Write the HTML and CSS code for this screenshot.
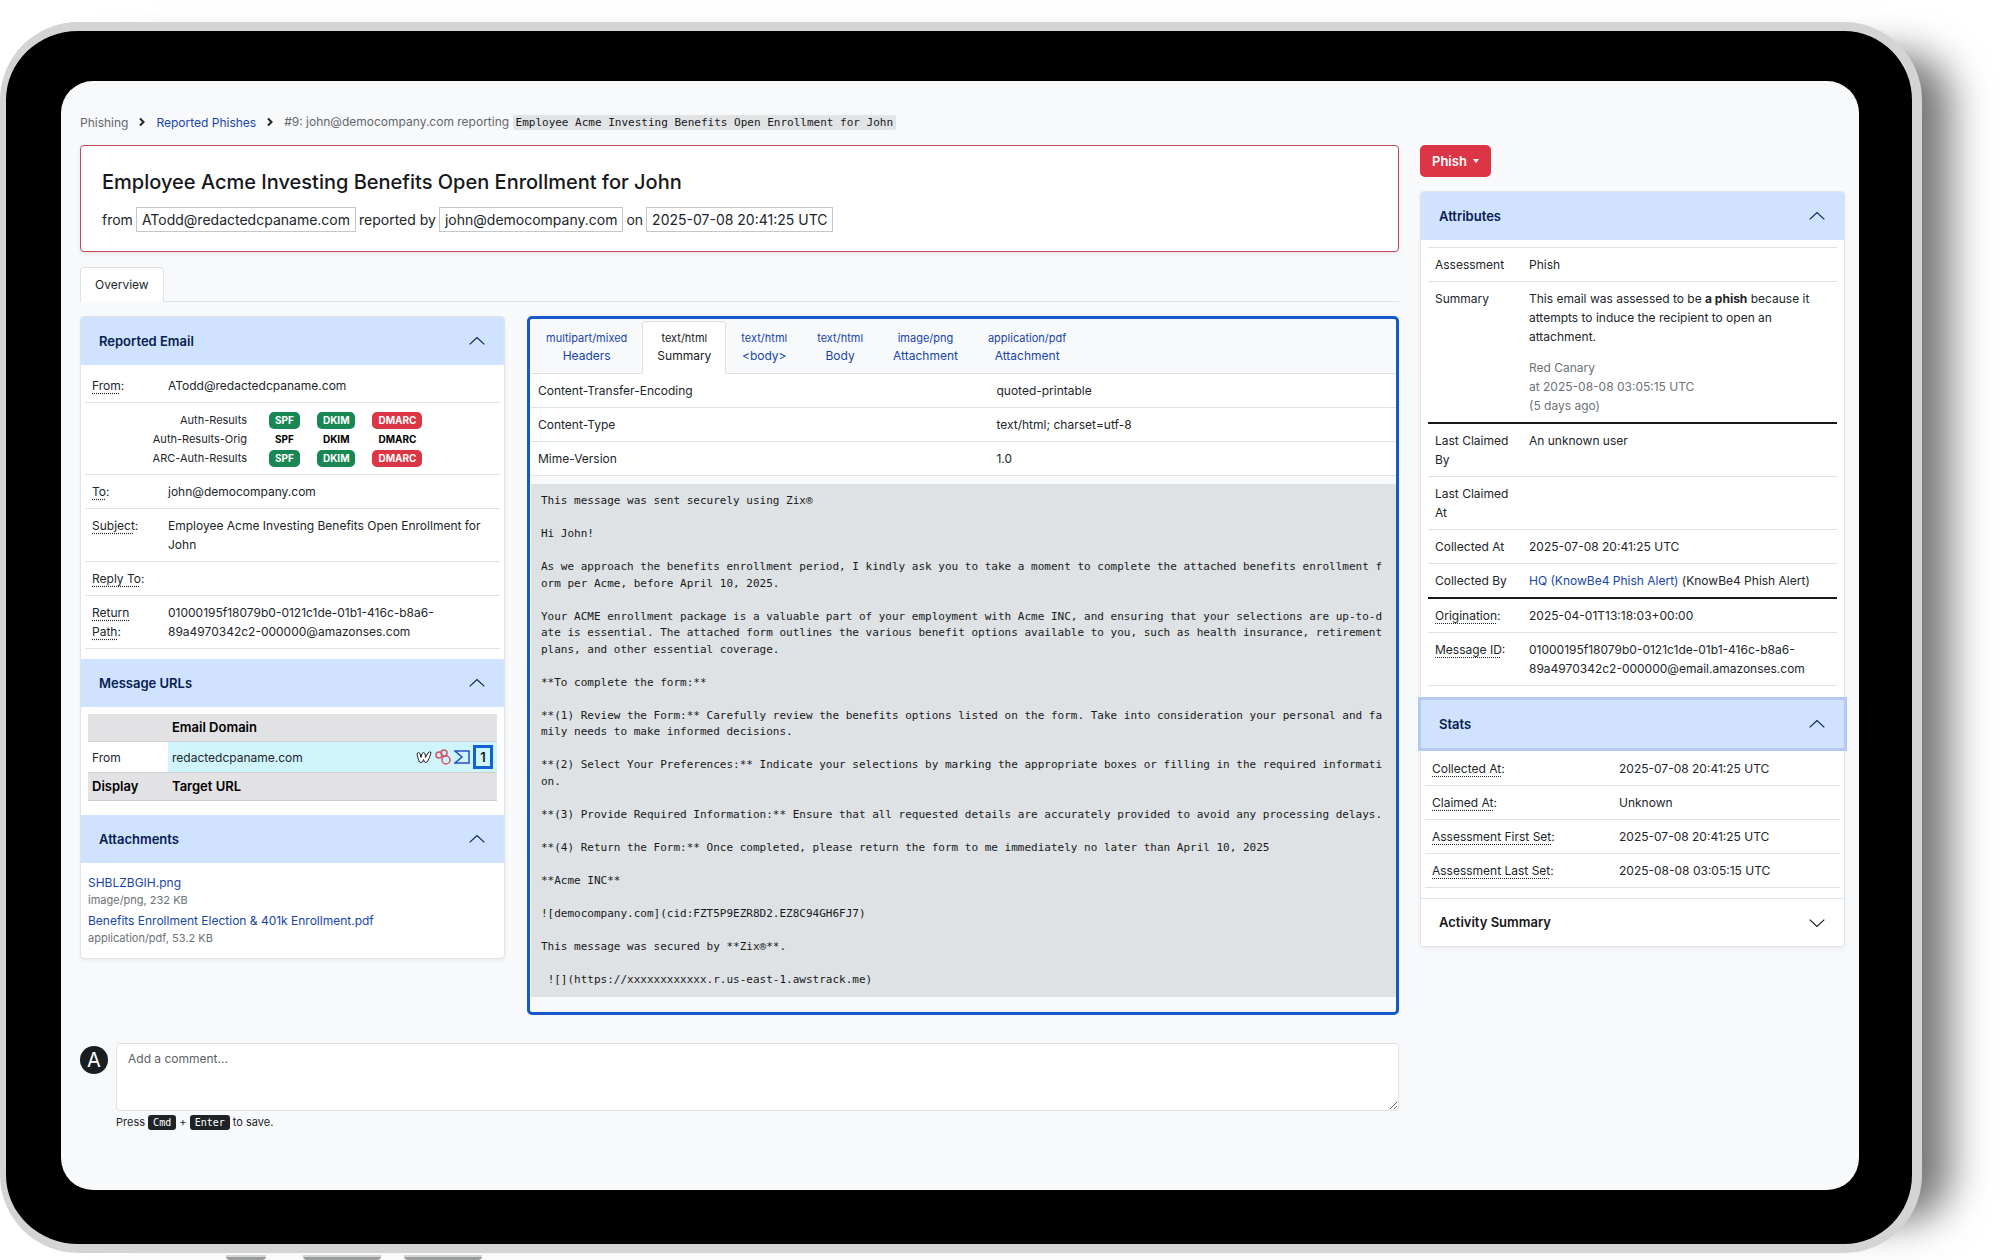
FILE: index.html
```html
<!DOCTYPE html>
<html lang="en">

<head>
    <meta charset="UTF-8">
    <meta name="viewport" content="width=device-width, initial-scale=1.0">
    <title>Reported Phish #9</title>
    <link rel="stylesheet" href="styles.css">
</head>

<body>
    <div class="device">
        <div class="screen">
            <main class="main">
                <!-- Breadcrumb -->
                <nav class="breadcrumb" aria-label="Breadcrumb">
                    <span>Phishing</span>
                    <svg class="crumb-arrow" viewBox="0 0 8 10"><path d="M2 1.5 5.5 5 2 8.5"/></svg>
                    <a href="#">Reported Phishes</a>
                    <svg class="crumb-arrow" viewBox="0 0 8 10"><path d="M2 1.5 5.5 5 2 8.5"/></svg>
                    <span>#9: john@democompany.com reporting <code>Employee Acme Investing Benefits Open Enrollment for John</code></span>
                </nav>

                <!-- Title -->
                <header class="title-box">
                    <h1>Employee Acme Investing Benefits Open Enrollment for John</h1>
                    <p class="title-meta">
                        <span>from</span> <span class="chip">ATodd@redactedcpaname.com</span>
                        <span>reported by</span> <span class="chip">john@democompany.com</span>
                        <span>on</span> <span class="chip">2025-07-08 20:41:25 UTC</span>
                    </p>
                </header>

                <div class="tabs">
                    <button type="button" class="tab active">Overview</button>
                </div>

                <div class="columns">
                    <!-- Left column -->
                    <div class="accordion">
                        <section>
                            <h2><button type="button" class="accordion-button" aria-expanded="true">Reported Email
                                <svg class="chevron" viewBox="0 0 16 16"><path d="M1.5 11 8 5l6.5 6"/></svg></button></h2>
                            <div class="accordion-body">
                                <table class="info email-table">
                                    <tr><th><abbr>From</abbr>:</th><td>ATodd@redactedcpaname.com</td></tr>
                                    <tr class="auth-row">
                                        <td colspan="2">
                                            <div class="auth">
                                                <span>Auth-Results</span>
                                                <b class="badge pass">SPF</b><b class="badge pass">DKIM</b><b class="badge fail">DMARC</b>
                                                <span>Auth-Results-Orig</span>
                                                <b class="badge">SPF</b><b class="badge">DKIM</b><b class="badge">DMARC</b>
                                                <span>ARC-Auth-Results</span>
                                                <b class="badge pass">SPF</b><b class="badge pass">DKIM</b><b class="badge fail">DMARC</b>
                                            </div>
                                        </td>
                                    </tr>
                                    <tr><th><abbr>To</abbr>:</th><td>john@democompany.com</td></tr>
                                    <tr><th><abbr>Subject</abbr>:</th><td>Employee Acme Investing Benefits Open Enrollment for John</td></tr>
                                    <tr><th><abbr>Reply To</abbr>:</th><td></td></tr>
                                    <tr><th><abbr>Return Path</abbr>:</th><td>01000195f18079b0-0121c1de-01b1-416c-b8a6-89a4970342c2-000000@amazonses.com</td></tr>
                                </table>
                            </div>
                        </section>
                        <section>
                            <h2><button type="button" class="accordion-button" aria-expanded="true">Message URLs
                                <svg class="chevron" viewBox="0 0 16 16"><path d="M1.5 11 8 5l6.5 6"/></svg></button></h2>
                            <div class="accordion-body urls-body">
                                <table class="urls">
                                    <tr class="head"><th></th><th>Email Domain</th></tr>
                                    <tr>
                                        <td>From</td>
                                        <td class="domain">
                                            <div class="domain-row">
                                                <span>redactedcpaname.com</span>
                                                <a href="#" aria-label="Whois"><svg class="whois" viewBox="0 0 16 16"><path d="M1 4.5Q2.5 2.5 4 4.5L5 8.5 6 4.5Q7.5 2.5 9 4.5L9.5 8.5 12 4Q13.5 2 15 3.5 14 9 11 13 9.5 14 8.5 13L7.5 10.5 6.5 13Q5 14 3.5 13 1.5 9 1 4.5Z"/></svg></a>
                                                <a href="#" aria-label="Related domains"><svg class="circles" viewBox="0 0 16 16"><circle cx="4" cy="6" r="3"/><circle cx="9" cy="4" r="3"/><circle cx="11" cy="11" r="4"/></svg></a>
                                                <a href="#" aria-label="VirusTotal"><svg class="sigma" viewBox="0 0 16 16"><path d="M1 2h14v12H1l7-6z"/></svg></a>
                                                <a href="#" class="count">1</a>
                                            </div>
                                        </td>
                                    </tr>
                                    <tr class="head"><th>Display</th><th>Target URL</th></tr>
                                </table>
                            </div>
                        </section>
                        <section>
                            <h2><button type="button" class="accordion-button" aria-expanded="true">Attachments
                                <svg class="chevron" viewBox="0 0 16 16"><path d="M1.5 11 8 5l6.5 6"/></svg></button></h2>
                            <ul class="accordion-body files">
                                <li><a href="#">SHBLZBGIH.png</a><small>image/png, 232 KB</small></li>
                                <li><a href="#">Benefits Enrollment Election &amp; 401k Enrollment.pdf</a><small>application/pdf, 53.2 KB</small></li>
                            </ul>
                        </section>
                    </div>

                    <!-- Message parts -->
                    <section class="message">
                        <div class="parts">
                            <button type="button" class="part"><small>multipart/mixed</small>Headers</button>
                            <button type="button" class="part active"><small>text/html</small>Summary</button>
                            <button type="button" class="part"><small>text/html</small>&lt;body&gt;</button>
                            <button type="button" class="part"><small>text/html</small>Body</button>
                            <button type="button" class="part"><small>image/png</small>Attachment</button>
                            <button type="button" class="part"><small>application/pdf</small>Attachment</button>
                        </div>
                        <table class="info headers-table">
                            <tr><th>Content-Transfer-Encoding</th><td>quoted-printable</td></tr>
                            <tr><th>Content-Type</th><td>text/html; charset=utf-8</td></tr>
                            <tr><th>Mime-Version</th><td>1.0</td></tr>
                        </table>
                        <pre class="source">This message was sent securely using Zix®

Hi John!

As we approach the benefits enrollment period, I kindly ask you to take a moment to complete the attached benefits enrollment form per Acme, before April 10, 2025.

Your ACME enrollment package is a valuable part of your employment with Acme INC, and ensuring that your selections are up-to-date is essential. The attached form outlines the various benefit options available to you, such as health insurance, retirement plans, and other essential coverage.

**To complete the form:**

**(1) Review the Form:** Carefully review the benefits options listed on the form. Take into consideration your personal and family needs to make informed decisions.

**(2) Select Your Preferences:** Indicate your selections by marking the appropriate boxes or filling in the required information.

**(3) Provide Required Information:** Ensure that all requested details are accurately provided to avoid any processing delays.

**(4) Return the Form:** Once completed, please return the form to me immediately no later than April 10, 2025

**Acme INC**

![democompany.com](cid:FZT5P9EZR8D2.EZ8C94GH6FJ7)

This message was secured by **Zix®**.

 ![](https://xxxxxxxxxxxx.r.us-east-1.awstrack.me)</pre>
                    </section>
                </div>

                <!-- Comment -->
                <form class="comment">
                    <span class="avatar">A</span>
                    <div class="comment-field">
                        <textarea id="comment" aria-label="Comment" placeholder="Add a comment..."></textarea>
                        <label for="comment">Press <kbd>Cmd</kbd> + <kbd>Enter</kbd> to save.</label>
                    </div>
                </form>
            </main>

            <!-- Right column -->
            <aside class="side">
                <button type="button" class="phish-button">Phish <span class="caret"></span></button>
                <div class="accordion">
                    <section>
                        <h2><button type="button" class="accordion-button" aria-expanded="true">Attributes
                            <svg class="chevron" viewBox="0 0 16 16"><path d="M1.5 11 8 5l6.5 6"/></svg></button></h2>
                        <div class="accordion-body attributes-body">
                            <table class="info attributes-table">
                                <tr><th>Assessment</th><td>Phish</td></tr>
                                <tr class="group-end">
                                    <th>Summary</th>
                                    <td>
                                        <p>This email was assessed to be <b>a phish</b> because it attempts to induce the recipient to open an attachment.</p>
                                        <p class="muted">Red Canary<br>at 2025-08-08 03:05:15 UTC<br>(5 days ago)</p>
                                    </td>
                                </tr>
                                <tr><th>Last Claimed By</th><td>An unknown user</td></tr>
                                <tr><th>Last Claimed At</th><td></td></tr>
                                <tr><th>Collected At</th><td>2025-07-08 20:41:25 UTC</td></tr>
                                <tr class="group-end"><th>Collected By</th><td><a href="#">HQ (KnowBe4 Phish Alert)</a> (KnowBe4 Phish Alert)</td></tr>
                                <tr><th><abbr>Origination</abbr>:</th><td>2025-04-01T13:18:03+00:00</td></tr>
                                <tr><th><abbr>Message ID</abbr>:</th><td>01000195f18079b0-0121c1de-01b1-416c-b8a6-89a4970342c2-000000@email.amazonses.com</td></tr>
                            </table>
                        </div>
                    </section>
                    <section>
                        <h2><button type="button" class="accordion-button focused" aria-expanded="true">Stats
                            <svg class="chevron" viewBox="0 0 16 16"><path d="M1.5 11 8 5l6.5 6"/></svg></button></h2>
                        <div class="accordion-body">
                            <table class="info stats-table">
                                <tr><th><abbr>Collected At</abbr>:</th><td>2025-07-08 20:41:25 UTC</td></tr>
                                <tr><th><abbr>Claimed At</abbr>:</th><td>Unknown</td></tr>
                                <tr><th><abbr>Assessment First Set</abbr>:</th><td>2025-07-08 20:41:25 UTC</td></tr>
                                <tr><th><abbr>Assessment Last Set</abbr>:</th><td>2025-08-08 03:05:15 UTC</td></tr>
                            </table>
                        </div>
                    </section>
                    <section>
                        <h2><button type="button" class="accordion-button" aria-expanded="false">Activity Summary
                            <svg class="chevron" viewBox="0 0 16 16"><path d="M1.5 11 8 5l6.5 6"/></svg></button></h2>
                    </section>
                </div>
            </aside>
        </div>
    </div>
    <div class="feet"><span></span><span></span><span></span></div>

    <script>
        // Open and close the accordion sections
        document.querySelectorAll('.accordion-button').forEach((button) => {
            button.addEventListener('click', () => {
                const body = button.parentElement.nextElementSibling;
                const open = button.getAttribute('aria-expanded') === 'true';
                button.setAttribute('aria-expanded', String(!open));
                if (body) {
                    body.hidden = open;
                }
            });
        });
    </script>
</body>

</html>
```
FILE: styles.css
```css
* {
    box-sizing: border-box;
}

body {
    display: flex;
    flex-direction: column;
    min-height: 100vh;
    margin: 0;
    padding-top: 22px;
    background-color: #fff;
    color: #212529;
    font-family: Inter, "Liberation Sans", sans-serif;
    font-size: 12px;
    line-height: 19px;
    overflow-x: hidden;
}

h1, h2, p, ul, pre {
    margin: 0;
}

a {
    color: #1746a8;
    text-decoration: none;
}

button {
    font: inherit;
    cursor: pointer;
}

[hidden] {
    display: none;
}

/* Tablet frame */
.device {
    display: flex;
    flex: 1;
    margin-right: 78px;
    padding: 50px 53px 54px 55px;
    background-color: #000;
    border: solid #d3d5d4;
    border-width: 9px 10px 9px 6px;
    border-radius: 78px;
    box-shadow: 60px 0 40px -32px rgba(0, 0, 0, 0.55);
}

.screen {
    display: grid;
    flex: 1;
    grid-template-columns: minmax(0, 1fr) 425px;
    align-items: start;
    gap: 21px;
    padding: 31px 14px 32px 19px;
    background-color: #f8f9fb;
    border-radius: 32px;
}

.feet {
    display: flex;
    gap: 23px;
    height: 7px;
    padding: 2px 0 0 226px;
}

.feet span {
    width: 78px;
    background-color: #9b9c9e;
    border-top: 2px solid #d3d5d4;
    border-radius: 0 0 4px 4px;
}

.feet span:first-child {
    width: 40px;
    margin-right: 14px;
}

/* Breadcrumb */
.breadcrumb {
    display: flex;
    align-items: center;
    gap: 10px;
    height: 20px;
    margin-bottom: 13px;
    color: #62676c;
}

.breadcrumb code {
    padding: 1px 3px;
    background-color: #e1e3e5;
    border-radius: 2px;
    color: #16181b;
    font-family: "DejaVu Sans Mono", monospace;
    font-size: 11px;
}

.crumb-arrow {
    width: 8px;
    height: 10px;
    fill: none;
    stroke: #212529;
    stroke-width: 2;
}

/* Title */
.title-box {
    padding: 22px 21px 19px;
    background-color: #fff;
    border: 1px solid #c04a5c;
    border-radius: 4px;
    box-shadow: 0 2px 4px rgba(0, 0, 0, 0.08);
}

.title-box h1 {
    margin-bottom: 11px;
    color: #16181b;
    font-size: 20px;
    font-weight: 500;
    line-height: 28px;
}

.title-meta {
    display: flex;
    align-items: center;
    gap: 3px;
    font-size: 14px;
}

.chip {
    padding: 1px 5px;
    border: 1px solid #c4c7ca;
    line-height: 21px;
}

/* Tabs */
.tabs {
    display: flex;
    margin: 15px 0 14px;
    border-bottom: 1px solid #dee2e6;
}

.tab {
    margin-bottom: -1px;
    padding: 7px 14px;
    background-color: #fff;
    border: 1px solid #dee2e6;
    border-bottom-color: #fff;
    border-radius: 4px 4px 0 0;
    color: #212529;
}

.columns {
    display: grid;
    grid-template-columns: 425px minmax(0, 1fr);
    align-items: start;
    gap: 22px;
}

/* Accordion */
.accordion {
    background-color: #fff;
    border: 1px solid #dfe2e6;
    border-radius: 4px;
    box-shadow: 0 2px 4px rgba(0, 0, 0, 0.05);
}

.accordion h2 {
    font-size: 13px;
}

.accordion-button {
    display: flex;
    align-items: center;
    justify-content: space-between;
    width: 100%;
    height: 48px;
    padding: 0 18px;
    background-color: #cfe2ff;
    border: 0;
    color: #06204f;
    font-size: 13px;
    font-weight: 600;
}

.accordion section:first-child .accordion-button {
    border-radius: 3px 3px 0 0;
}

.accordion-button.focused {
    box-shadow: 0 0 0 3px #b5c9ee;
}

.accordion-button[aria-expanded="false"] {
    background-color: #fff;
    border-top: 1px solid #dfe2e6;
    border-radius: 0 0 3px 3px;
    color: #16181b;
}

.chevron {
    width: 18px;
    height: 18px;
    fill: none;
    stroke: currentColor;
    stroke-width: 1;
}

.accordion-button[aria-expanded="false"] .chevron {
    transform: rotate(180deg);
}

.accordion-body {
    padding: 4px 4px 10px;
}

/* Key and value tables */
.info {
    width: 100%;
    border-collapse: collapse;
    table-layout: fixed;
}

.info th,
.info td {
    padding: 7px;
    border-bottom: 1px solid #dee2e6;
    font-weight: 400;
    text-align: left;
    vertical-align: top;
    overflow-wrap: anywhere;
}

.info .group-end th,
.info .group-end td {
    border-bottom: 2px solid #16181b;
}

.info .auth-row td {
    padding: 8px 7px 6px;
}

.info abbr {
    text-decoration: underline dotted;
    text-underline-offset: 3px;
}

.email-table th {
    width: 76px;
}

.auth {
    display: grid;
    grid-template-columns: 160px auto auto auto;
    justify-content: start;
    justify-items: start;
    align-items: center;
    column-gap: 17px;
    grid-auto-rows: 19px;
    font-size: 11px;
}

.auth span {
    justify-self: end;
    padding-right: 5px;
}

.badge {
    padding: 0 6px;
    border-radius: 5px;
    color: #000;
    font-size: 10px;
    font-weight: 700;
    line-height: 17px;
}

.pass {
    background-color: #198754;
    color: #fff;
}

.fail {
    background-color: #dc3545;
    color: #fff;
}

/* Message URLs */
.urls-body {
    padding: 7px 7px 14px;
}

.urls {
    width: 100%;
    border-collapse: collapse;
}

.urls th,
.urls td {
    padding: 4px;
    border-bottom: 1px solid #cdd0d3;
    text-align: left;
}

.urls td {
    padding: 3px 4px;
}

.urls th:first-child,
.urls td:first-child {
    width: 80px;
}

.urls th {
    color: #000;
    font-size: 13px;
    font-weight: 600;
}

.urls .head {
    background-color: #e2e2e4;
}

.urls .domain {
    background-color: #cff4fc;
}

.domain-row {
    display: flex;
    align-items: center;
    gap: 3px;
}

.domain-row span {
    flex: 1;
}

.domain-row svg {
    display: block;
    width: 16px;
    height: 16px;
    fill: none;
}

.domain-row .whois {
    fill: #fff;
    stroke: #212529;
    stroke-width: 1;
    stroke-linejoin: round;
}

.circles {
    stroke: #cf5563;
    stroke-width: 1.5;
}

.sigma {
    stroke: #2a4fc4;
    stroke-width: 1.5;
}

.count {
    width: 20px;
    border: 3px solid #1263cf;
    color: #16181b;
    font-size: 13px;
    font-weight: 600;
    line-height: 18px;
    text-align: center;
}

/* Attachments */
.files {
    padding: 10px 7px 9px;
    list-style: none;
}

.files li {
    margin-bottom: 2px;
}

.files a,
.files small {
    display: block;
}

.files small {
    color: #6c7278;
    font-size: 11px;
    line-height: 17px;
}

/* Message panel */
.message {
    padding: 2px 0 15px 1px;
    border: 3px solid #1459c7;
    border-radius: 5px;
}

.parts {
    display: flex;
    border-bottom: 1px solid #dee2e6;
}

.part {
    margin-bottom: -1px;
    padding: 7px 14px 8px;
    background-color: transparent;
    border: 1px solid transparent;
    border-radius: 4px 4px 0 0;
    color: #1746a8;
    line-height: 18px;
}

.part small {
    display: block;
    font-size: 11px;
}

.part.active {
    background-color: #fff;
    border-color: #dee2e6 #dee2e6 #fff;
    color: #16181b;
}

.headers-table {
    margin-bottom: 8px;
    background-color: #fff;
}

.headers-table th {
    width: 53%;
}

.source {
    padding: 9px 10px;
    background-color: #dee2e4;
    color: #16181b;
    font-family: "DejaVu Sans Mono", monospace;
    font-size: 11px;
    line-height: 1.5;
    white-space: pre-wrap;
    word-break: break-all;
}

/* Comment */
.comment {
    display: flex;
    align-items: flex-start;
    gap: 8px;
    margin-top: 28px;
}

.avatar {
    width: 28px;
    margin-top: 3px;
    background-color: #1a1d21;
    border-radius: 50%;
    color: #fff;
    font-size: 20px;
    line-height: 28px;
    text-align: center;
}

.comment-field {
    display: flex;
    flex: 1;
    flex-direction: column;
    gap: 2px;
}

.comment textarea {
    height: 68px;
    padding: 5px 11px;
    background-color: #fff;
    border: 1px solid #dee2e6;
    border-radius: 4px;
    font: inherit;
}

.comment textarea::placeholder {
    color: #5c6166;
}

.comment label {
    font-size: 11px;
}

kbd {
    padding: 2px 5px;
    background-color: #1f2327;
    border-radius: 3px;
    color: #fff;
    font-family: "DejaVu Sans Mono", monospace;
    font-size: 10px;
}

/* Side column */
.side {
    margin-top: 33px;
}

.phish-button {
    display: flex;
    align-items: center;
    gap: 6px;
    height: 32px;
    margin-bottom: 14px;
    padding: 0 12px;
    background-color: #dc3545;
    border: 0;
    border-radius: 5px;
    color: #fff;
    font-size: 13px;
    font-weight: 600;
}

.caret {
    border: 3px solid transparent;
    border-top: 4px solid #fff;
    border-bottom: 0;
}

.attributes-body {
    padding: 7px 7px 14px;
}

.attributes-table {
    border-top: 1px solid #dee2e6;
}

.attributes-table th {
    width: 94px;
}

.attributes-table .muted {
    margin-top: 12px;
    color: #6c7278;
}

.stats-table th {
    width: 187px;
}
```
